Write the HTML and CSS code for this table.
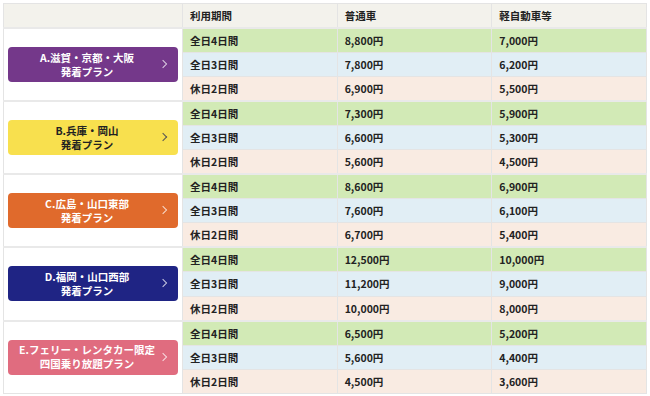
FILE: index.html
```html
<!DOCTYPE html>
<html>
<head>
    <title>料金表</title>
    <link rel="stylesheet" href="styles.css">
</head>
<body>
    <table class="price-table">
        <thead>
            <tr>
                <th class="plan-col"></th>
                <th>利用期間</th>
                <th>普通車</th>
                <th>軽自動車等</th>
            </tr>
        </thead>
        <tbody>
            <tr class="row-4 group-start">
                <td class="plan-col" rowspan="3"><a class="plan-btn plan-a"><span class="line">A.滋賀・京都・大阪</span><span class="line">発着プラン</span><span class="chev"></span></a></td>
                <td>全日4日間</td><td>8,800円</td><td>7,000円</td>
            </tr>
            <tr class="row-3"><td>全日3日間</td><td>7,800円</td><td>6,200円</td></tr>
            <tr class="row-2"><td>休日2日間</td><td>6,900円</td><td>5,500円</td></tr>

            <tr class="row-4 group-start">
                <td class="plan-col" rowspan="3"><a class="plan-btn plan-b"><span class="line">B.兵庫・岡山</span><span class="line">発着プラン</span><span class="chev"></span></a></td>
                <td>全日4日間</td><td>7,300円</td><td>5,900円</td>
            </tr>
            <tr class="row-3"><td>全日3日間</td><td>6,600円</td><td>5,300円</td></tr>
            <tr class="row-2"><td>休日2日間</td><td>5,600円</td><td>4,500円</td></tr>

            <tr class="row-4 group-start">
                <td class="plan-col" rowspan="3"><a class="plan-btn plan-c"><span class="line">C.広島・山口東部</span><span class="line">発着プラン</span><span class="chev"></span></a></td>
                <td>全日4日間</td><td>8,600円</td><td>6,900円</td>
            </tr>
            <tr class="row-3"><td>全日3日間</td><td>7,600円</td><td>6,100円</td></tr>
            <tr class="row-2"><td>休日2日間</td><td>6,700円</td><td>5,400円</td></tr>

            <tr class="row-4 group-start">
                <td class="plan-col" rowspan="3"><a class="plan-btn plan-d"><span class="line">D.福岡・山口西部</span><span class="line">発着プラン</span><span class="chev"></span></a></td>
                <td>全日4日間</td><td>12,500円</td><td>10,000円</td>
            </tr>
            <tr class="row-3"><td>全日3日間</td><td>11,200円</td><td>9,000円</td></tr>
            <tr class="row-2"><td>休日2日間</td><td>10,000円</td><td>8,000円</td></tr>

            <tr class="row-4 group-start">
                <td class="plan-col" rowspan="3"><a class="plan-btn plan-e"><span class="line">E.フェリー・レンタカー限定</span><span class="line">四国乗り放題プラン</span><span class="chev"></span></a></td>
                <td>全日4日間</td><td>6,500円</td><td>5,200円</td>
            </tr>
            <tr class="row-3"><td>全日3日間</td><td>5,600円</td><td>4,400円</td></tr>
            <tr class="row-2"><td>休日2日間</td><td>4,500円</td><td>3,600円</td></tr>
        </tbody>
    </table>
</body>
</html>
```

FILE: styles.css
```css
body { margin: 0; padding: 3px; background: #fff; font-family: "Noto Sans CJK JP", sans-serif; color: #222; }
.price-table { width: 644px; border-collapse: collapse; table-layout: fixed; font-size: 10.5px; font-weight: bold; }
.price-table th, .price-table td { border: 1px solid #e4e4e4; padding: 0 0 0 7px; text-align: left; height: 23.05px; line-height: 15px; }
.price-table th { background: #f3f2ec; height: 23px; }
.price-table th.plan-col { width: 171px; }
.price-table td.plan-col { background: #fff; padding: 0 4px; vertical-align: middle; }
.group-start td { border-top: 2px solid #e9e9e9; }
.row-4 td { background: #d2eab6; }
.row-3 td { background: #e1eef5; }
.row-2 td { background: #f9ebe2; }
.plan-btn { position: relative; display: flex; flex-direction: column; justify-content: center; height: 35px; border-radius: 4px; color: #fff; text-align: center; font-size: 10.5px; padding-right: 12px; box-sizing: border-box; }
.line { display: block; line-height: 15px; height: 15px; margin-top: -1px; }
.chev { position: absolute; right: 12px; top: 14px; width: 5px; height: 5px; border-top: 1px solid rgba(255,255,255,0.75); border-right: 1px solid rgba(255,255,255,0.75); transform: rotate(45deg); }
.plan-a { background: #74388a; }
.plan-b { background: #f8e04e; color: #222; }
.plan-b .chev { border-color: #555; }
.plan-c { background: #e06a2c; }
.plan-d { background: #1f2484; }
.plan-e { background: #e06c7f; }
```
